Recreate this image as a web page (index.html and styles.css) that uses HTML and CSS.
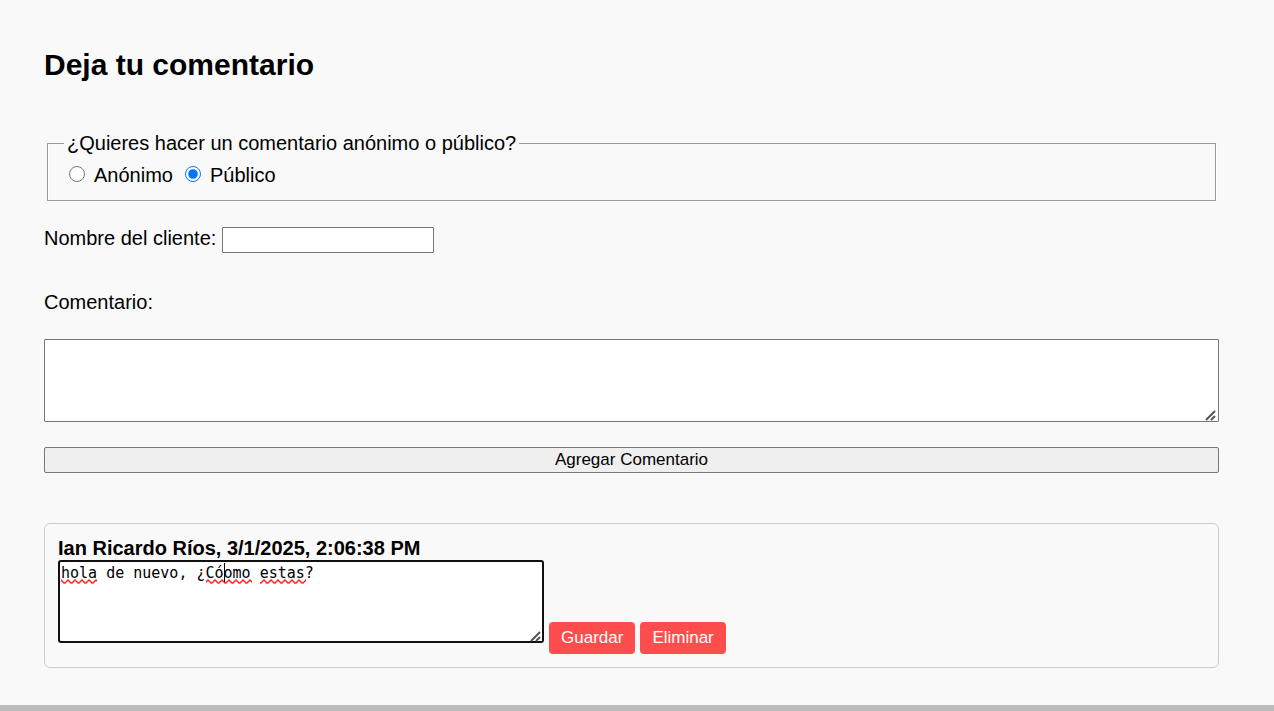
FILE: index.html
```html
<!DOCTYPE html>
<html lang="es">
<head>
<meta charset="utf-8">
<title>Deja tu comentario</title>
<link rel="stylesheet" href="styles.css">
</head>
<body>
<main class="page">
  <h2 class="title">Deja tu comentario</h2>
  <form class="form">
    <fieldset class="visibility">
      <legend>¿Quieres hacer un comentario anónimo o público?</legend>
      <div class="options">
        <input class="radio" type="radio" id="anonimo" name="tipo">
        <label for="anonimo">Anónimo</label>
        <input class="radio" type="radio" id="publico" name="tipo" checked>
        <label for="publico">Público</label>
      </div>
    </fieldset>
    <div class="name-row">
      <label for="nombre">Nombre del cliente:</label>
      <input class="name" type="text" id="nombre">
    </div>
    <label class="comment-label" for="comentario">Comentario:</label>
    <div class="comment-box">
      <textarea class="comment" id="comentario"></textarea>
      <svg class="grip" width="12" height="12" aria-hidden="true">
        <path d="M1 11 L10 2 M6 11 L10 7" fill="none" stroke="#555" stroke-width="2"/>
      </svg>
    </div>
    <button class="submit" type="button">Agregar Comentario</button>
  </form>
  <article class="card">
    <label class="author" for="edicion">Ian Ricardo Ríos, 3/1/2025, 2:06:38 PM</label>
    <div class="edit-row">
      <div class="editor">
        <textarea class="edit" id="edicion" spellcheck="false">hola de nuevo, ¿Cóomo estas?</textarea>
        <svg class="marks" width="260" height="23" aria-hidden="true">
          <defs>
            <pattern id="wave" width="7" height="5" y="17" patternUnits="userSpaceOnUse">
              <path d="M-1 0 L0 1 L3 4 L4 4 L7 1 L8 0" fill="none" stroke="#f22" stroke-width="1.5"/>
            </pattern>
          </defs>
          <rect x="0" y="17" width="36" height="5" fill="url(#wave)"/>
          <rect x="145" y="17" width="46" height="5" fill="url(#wave)"/>
          <rect x="199" y="17" width="46" height="5" fill="url(#wave)"/>
          <rect x="163" y="1" width="1" height="19"/>
        </svg>
        <svg class="grip" width="12" height="12" aria-hidden="true">
          <path d="M1 11 L10 2 M6 11 L10 7" fill="none" stroke="#555" stroke-width="2"/>
        </svg>
      </div>
      <button class="action" type="button">Guardar</button>
      <button class="action" type="button">Eliminar</button>
    </div>
  </article>
</main>
<footer class="footer"></footer>
</body>
</html>
```
FILE: styles.css
```css
* {
  box-sizing: border-box;
}

body {
  margin: 0;
  background: #f9f9f9;
  color: #000;
  font: 20px/24px "Liberation Sans", Arial, sans-serif;
}

.page {
  padding: 44px 55px 37px 44px;
}

.title {
  margin: 0 0 45px;
  font-size: 30px;
  line-height: 42px;
}

.form {
  display: flex;
  flex-direction: column;
  margin-bottom: 50px;
}

.visibility {
  margin: 0 3px 25px;
  padding: 7px 16px 13px;
  border: 1px solid #999;
  box-shadow: inset 1px 0 #fff, 1px 1px #fff;
}

.visibility legend {
  padding: 0 3px;
  line-height: 25px;
}

.options {
  display: flex;
  align-items: center;
}

.radio {
  width: 16px;
  height: 16px;
  margin: 0 9px 2px 5px;
}

.options label + .radio {
  margin-left: 12px;
}

.name-row {
  display: flex;
  gap: 6px;
  margin-bottom: 37px;
}

.name {
  width: 212px;
  height: 26px;
  margin-top: 1px;
  padding: 1px 2px;
  border: 1px solid #767676;
  border-radius: 1px;
  font: 17px "Liberation Sans", Arial, sans-serif;
}

.comment-label {
  margin-bottom: 25px;
}

.comment,
.edit {
  display: block;
  height: 83px;
  padding: 3px;
  border: 1px solid #767676;
  border-radius: 1px;
  background: #fff;
  font: 15px/20px "DejaVu Sans Mono", monospace;
}

.comment::-webkit-resizer,
.edit::-webkit-resizer {
  background: #fff;
}

.comment-box {
  position: relative;
  margin-bottom: 25px;
}

.comment {
  width: 100%;
}

.grip {
  position: absolute;
  right: 2px;
  bottom: 1px;
  pointer-events: none;
}

.submit {
  height: 26px;
  padding: 0;
  border: 1px solid #767676;
  border-radius: 2px;
  background: #efefef;
  color: #000;
  font: 17px "Liberation Sans", Arial, sans-serif;
}

.card {
  padding: 12px 13px 13px;
  border: 1px solid #ccc;
  border-radius: 6px;
}

.author {
  display: block;
  font-weight: bold;
}

.edit-row {
  display: flex;
  align-items: flex-end;
  gap: 5px;
}

.editor {
  position: relative;
  margin-bottom: 11px;
}

.edit {
  width: 486px;
  padding: 1px;
  border: 2px solid #101010;
  border-radius: 3px;
}

.marks {
  position: absolute;
  top: 2px;
  left: 3px;
  pointer-events: none;
}

.action {
  height: 32px;
  padding: 0 12px;
  border: 0;
  border-radius: 4px;
  background: #ff4d4d;
  color: #fff;
  font: 17px "Liberation Sans", Arial, sans-serif;
}

.footer {
  height: 6px;
  background: #bbb;
}
```
